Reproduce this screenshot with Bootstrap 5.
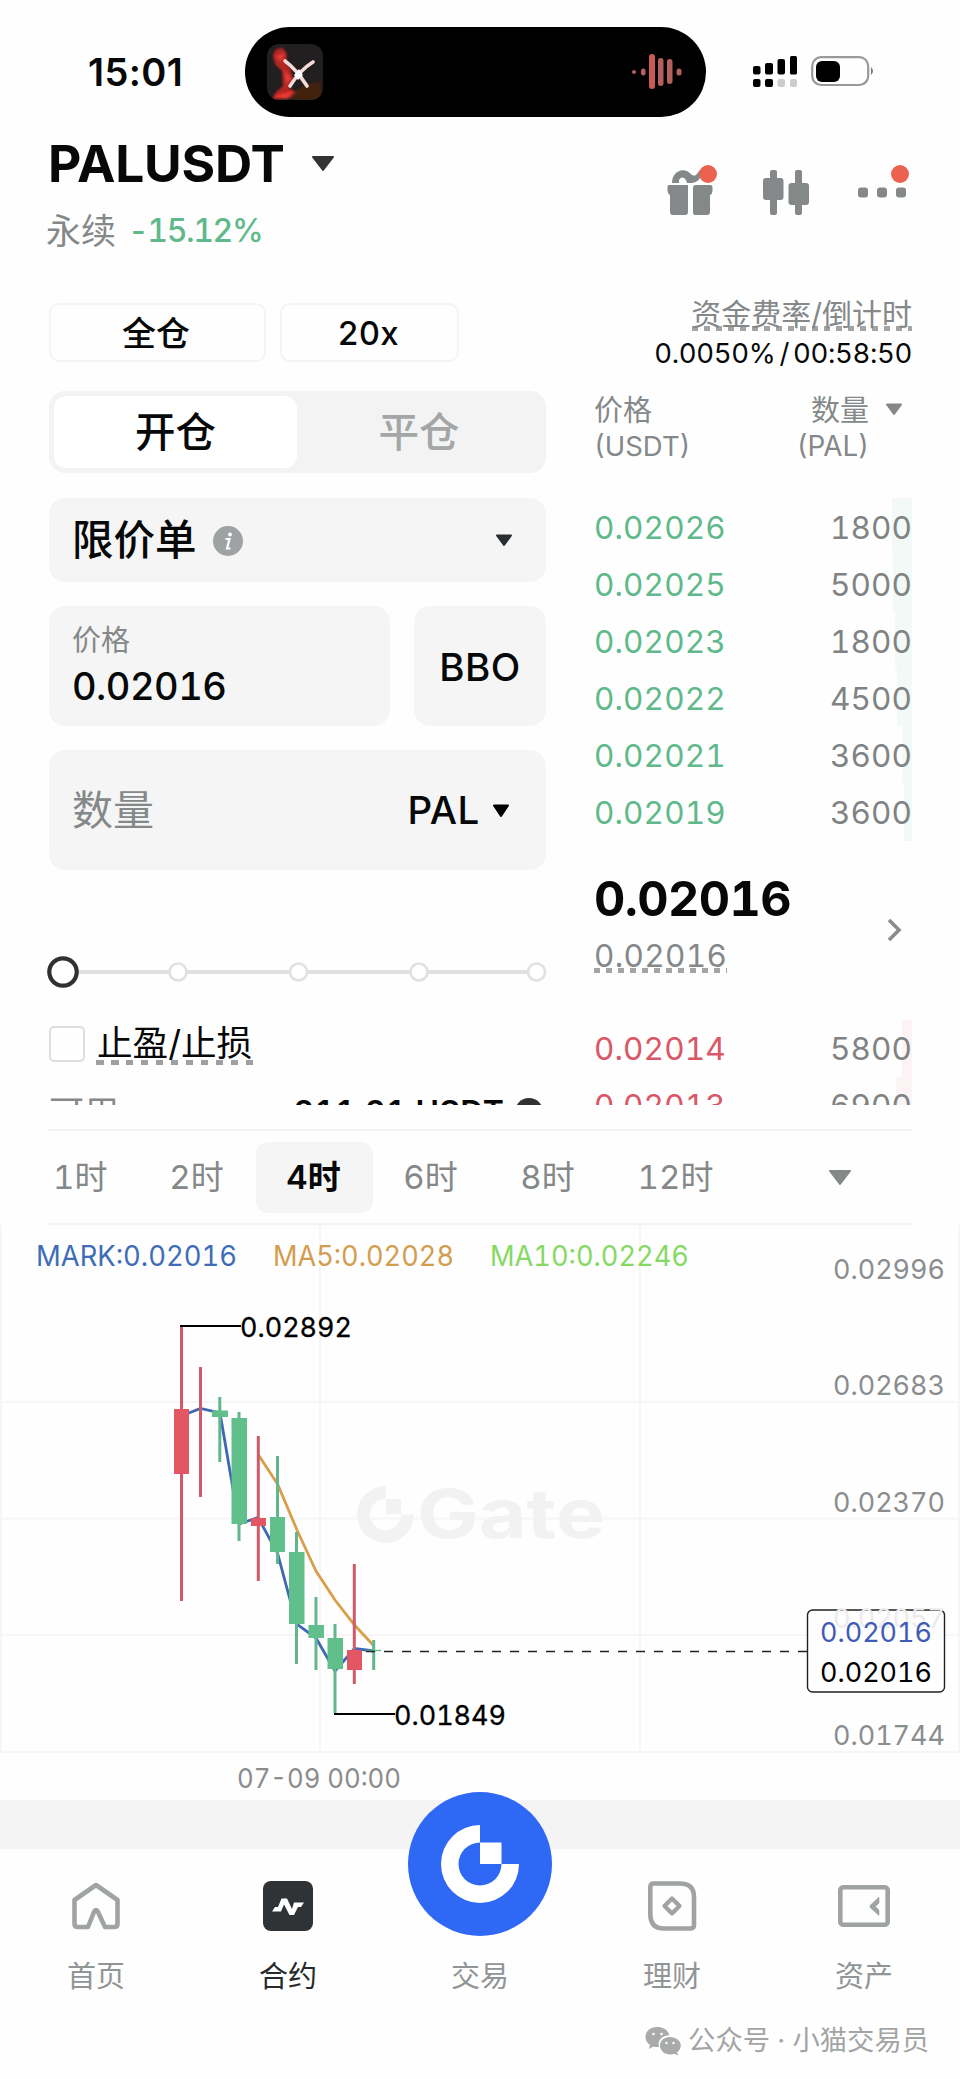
<!DOCTYPE html>
<html lang="zh-CN">
<head>
<meta charset="utf-8">
<meta name="viewport" content="width=device-width, initial-scale=1">
<title>PALUSDT 永续</title>
<link href="https://cdn.jsdelivr.net/npm/bootstrap@5.3.0/dist/css/bootstrap.min.css" rel="stylesheet">
<style>
  :root { --up:#5fb98b; --down:#d95767; --ink:#070808; --mute:#848889; --soft:#f5f5f5; }
  body { font-family: Inter, "Noto Sans CJK SC", sans-serif; font-variant-numeric: tabular-nums; color: var(--ink); background:#fefefe; width:960px; height:2079px; overflow:hidden; line-height:1; white-space:nowrap; }
  svg { display:block; flex:none; }
  .mute { color: var(--mute); }
  .status { height:135px; padding-left:88px; padding-top:27px; }
  .clock { font-size:38px; font-weight:600; width:157px; height:90px; letter-spacing:.4px; font-variant-numeric:normal; }
  .island { width:461px; height:90px; border-radius:45px; background:#000; padding:0 24px 0 22px; }
  .head { height:135px; padding:4px 48px 0 48px; }
  .symbol { font-size:51.5px; font-weight:700; height:50px; letter-spacing:-.2px; }
  .sub { height:62px; margin-top:11px; font-size:35px; margin-left:-2px; }
  .sub .chg { font-size:32px; letter-spacing:-1.4px; color:var(--up); font-weight:500; }
  .trade { height:835px; overflow:hidden; padding:0 48px 0 49px; }
  .leftcol { width:497px; padding-top:33px; }
  .rightcol { width:318px; }
  .box { background:var(--soft); border-radius:16px; }
  .pill { height:59px; border:2px solid #f3f4f4; border-radius:10px; font-size:34px; font-weight:500; padding:2px 3px 0 0; }
  .segment { height:82px; background:#f3f3f3; border-radius:16px; padding:5px; margin-top:29px; font-size:40.5px; font-weight:500; }
  .segment .on { width:243px; background:#fff; border-radius:12px; padding-top:2px; }
  .segment .off { color:#a4a6a6; padding-top:2px; }
  .order { height:84px; margin-top:25px; padding:1px 33px 0 23px; font-size:41.5px; font-weight:500; }
  .pricebox { width:341px; padding:17px 23px; }
  .dash { background:repeating-linear-gradient(90deg,#a3a5a5 0 6px,transparent 6px 12px) 0 100%/100% 5px no-repeat; }
  .dash-lg { background:repeating-linear-gradient(90deg,#a0a0a0 0 7.5px,transparent 7.5px 15px) 0 100%/100% 5px no-repeat; }
  .check { width:36px; height:36px; border:2.5px solid #dedede; border-radius:5px; }
  .bookrow { height:57.1px; font-size:31.5px; padding-top:2px; }
  .bookrow .px { letter-spacing:.1px; }
  .bookrow .qty { color:#7f8384; letter-spacing:.1px; }
  .buy .px { color:var(--up); } .sell .px { color:var(--down); }
  .depth-buy { background:linear-gradient(#f3f9f7,#f3f9f7) 100% 0/var(--w) 100% no-repeat; }
  .depth-sell { background:linear-gradient(#fcf4f4,#fcf4f4) 100% 0/var(--w) 100% no-repeat; }
  .last { font-size:48.5px; font-weight:700; letter-spacing:-.6px; height:50px; }
  .frames { margin:24px 48px 0 48px; height:96px; border-top:2px solid #f3f3f3; border-bottom:2px solid #f3f3f3; font-size:33px; color:var(--mute); }
  .frames > div { width:117px; height:71px; border-radius:12px; padding:1px 2px 0 0; }
  .frames .on { background:var(--soft); color:var(--ink); font-weight:600; }
  .tabbar { height:230px; padding-top:26px; font-size:29px; color:#929595; }
  .tabbar .item { width:192px; }
  .tabbar .ico { height:73px; padding-top:2px; }
  .trade-btn { position:absolute; left:408px; top:-57px; }
  .credit { font-size:27.3px; color:#a3a4a4; padding-right:31px; }
</style>
</head>
<body>
<header class="status d-flex">
  <div class="clock d-flex align-items-center">15:01</div>
  <div class="island d-flex align-items-center justify-content-between">
    <svg width="56" height="56" viewBox="0 0 56 56">
      <defs>
        <clipPath id="cv"><rect width="56" height="56" rx="12"/></clipPath>
        <filter id="soft"><feGaussianBlur stdDeviation="1.2"/></filter>
      </defs>
      <g clip-path="url(#cv)">
        <rect width="56" height="56" fill="#211f20"/>
        <g filter="url(#soft)">
          <path d="M6 12Q7 4 15 4Q22 8 19 19L23 24L26 34L22 44L29 48L24 54L5 56L9 48L16 42L15 27L8 20Z" fill="#b52623"/>
          <path d="M8 12L18 9L14 18ZM17 25L25 35L19 40Z" fill="#e23a34"/>
          <path d="M30 46Q42 38 54 38V56H26Z" fill="#43240f"/>
          <path d="M6 52L26 47L20 55Z" fill="#ea3a31"/>
        </g>
        <path d="M18 17Q29 25 40 42M46 18Q33 26 23 42" stroke="#f5dad8" stroke-width="3.6" fill="none" stroke-linecap="round"/>
        <path d="M32 25L36 31L31 36L27 31Z" fill="#fff"/>
      </g>
    </svg>
    <svg width="50" height="36" viewBox="0 0 50 36" fill="#b5605d">
      <rect x="0" y="16" width="4" height="4" rx="2"/><rect x="9" y="14.5" width="4.5" height="7" rx="2.2"/>
      <rect x="17" y="0" width="6" height="35" rx="3" fill="#cb5a55"/><rect x="26" y="4" width="5.5" height="28" rx="2.7"/>
      <rect x="35" y="5" width="5.5" height="25" rx="2.7"/><rect x="44.500" y="14.500" width="5" height="7" rx="2.500"/>
    </svg>
  </div>
  <svg width="130" height="34" viewBox="0 0 130 34" style="margin:27px 0 0 46px">
    <rect x="1" y="12" width="7.500" height="8.500" rx="2"/><rect x="13" y="9" width="8" height="11.500" rx="2"/><rect x="25.500" y="5" width="7.500" height="15.500" rx="2"/><rect x="38" y="2" width="7" height="18.500" rx="1.500"/>
    <rect x="1" y="25" width="7.500" height="8" rx="2"/><rect x="13" y="25" width="8" height="8" rx="2"/><rect x="25.500" y="25" width="7.500" height="8" rx="2" fill="#ccc"/><rect x="38" y="25" width="7" height="8" rx="2" fill="#ccc"/>
    <rect x="60.200" y="3.200" width="56" height="27.800" rx="9" fill="none" stroke="#999" stroke-width="2.200"/>
    <rect x="64" y="7" width="24" height="21" rx="6"/><path d="M119 13Q123 17 119 21Z" fill="#777"/>
  </svg>
</header>

<section class="head d-flex justify-content-between">
  <div>
    <div class="symbol d-flex align-items-center">PALUSDT
      <svg width="24" height="16" viewBox="0 0 24 16" style="margin-left:26px"><path d="M2 1H22L12 14Z" fill="#333" stroke="#333" stroke-width="2" stroke-linejoin="round"/></svg>
    </div>
    <div class="sub d-flex align-items-center"><span class="mute">永续</span><span class="chg" style="margin-left:12px">-15.12%</span></div>
  </div>
  <svg width="250" height="60" viewBox="662 160 250 60" style="margin-top:21px" fill="#848889">
    <path d="M672 183C672 173 680 168 687 171C691 173 692 177 696 175L700 170V178Q698 182 692 183H687C686 178 682 175 679 180V183Z"/>
    <path d="M669 185H688V212Q688 215 685 215H673Q670 215 670 212V195Q668 194 667.500 191V187Q667.500 185 669 185ZM693 188Q693 185 696 185H710Q712.500 185 712.500 187V191Q712.500 194 710 195V212Q710 215 707 215H695Q693 215 693 212Z"/>
    <circle cx="708" cy="174" r="9" fill="#ec6250"/>
    <rect x="770" y="170" width="7" height="45" rx="2"/><rect x="763" y="178" width="20.500" height="22" rx="3"/>
    <rect x="795" y="170" width="7" height="45" rx="2"/><rect x="788.500" y="183" width="20.500" height="22" rx="3"/>
    <rect x="858" y="187.500" width="10" height="10" rx="3"/><rect x="877" y="187.500" width="10" height="10" rx="3"/><rect x="896" y="187.500" width="10" height="10" rx="3"/>
    <circle cx="900" cy="174" r="9" fill="#ec6250"/>
  </svg>
</section>

<main class="trade d-flex justify-content-between">
  <div class="leftcol">
    <div class="d-flex">
      <div class="pill d-flex align-items-center justify-content-center" style="width:217px">全仓</div>
      <div class="pill d-flex align-items-center justify-content-center" style="width:179px;margin-left:14px;font-size:33px">20x</div>
    </div>
    <div class="segment d-flex">
      <div class="on d-flex align-items-center justify-content-center">开仓</div>
      <div class="off flex-fill d-flex align-items-center justify-content-center">平仓</div>
    </div>
    <div class="box order d-flex align-items-center">限价单
      <svg width="30" height="30" viewBox="0 0 30 30" style="margin-left:16px"><circle cx="15" cy="15" r="15" fill="#9fa2a3"/><circle cx="17" cy="8.500" r="1.900" fill="#fff"/><path d="M12.500 13H16.500L14 22.500H17.500" fill="none" stroke="#fff" stroke-width="2.200"/></svg>
      <svg class="ms-auto" width="18" height="13" viewBox="0 0 18 13"><path d="M2 1.500H16L9 11Z" fill="#2b2e30" stroke="#2b2e30" stroke-width="2" stroke-linejoin="round"/></svg>
    </div>
    <div class="d-flex justify-content-between" style="height:120px;margin-top:24px">
      <div class="box pricebox">
        <div class="mute d-flex align-items-center" style="font-size:29px;height:34px">价格</div>
        <div class="d-flex align-items-center" style="font-size:38px;font-weight:500;height:58px;letter-spacing:-.5px">0.02016</div>
      </div>
      <div class="box d-flex align-items-center justify-content-center" style="width:132px;font-size:38.500px;font-weight:500;letter-spacing:.5px;padding-top:2px">BBO</div>
    </div>
    <div class="box d-flex align-items-center" style="height:120px;margin-top:24px;padding:1px 36px 0 23px;font-size:41px">
      <span class="mute">数量</span><span class="ms-auto" style="font-size:38.500px;font-weight:500;letter-spacing:.6px">PAL</span>
      <svg width="18" height="14" viewBox="0 0 18 14" style="margin-left:12px"><path d="M2 1.500H16L9 12Z" stroke="#000" stroke-width="2" stroke-linejoin="round"/></svg>
    </div>
    <svg width="500" height="36" viewBox="47 954 500 36" style="margin:84px 0 0 -2px">
      <path d="M63 972H536" stroke="#e1e1e1" stroke-width="4"/>
      <g fill="#fff" stroke="#e1e1e1" stroke-width="2.600"><circle cx="178" cy="972" r="8.500"/><circle cx="298.500" cy="972" r="8.500"/><circle cx="419" cy="972" r="8.500"/><circle cx="536.500" cy="972" r="8.500"/></g>
      <circle cx="63" cy="972" r="13.700" fill="#fff" stroke="#2f3133" stroke-width="4.200"/>
    </svg>
    <div class="d-flex align-items-center" style="height:54px;margin-top:27px">
      <div class="check"></div>
      <div class="dash-lg d-flex align-items-center" style="margin-left:11px;height:42px;font-size:35.600px;width:158px;padding-left:1px">止盈/止损</div>
    </div>
    <div class="d-flex align-items-center" style="height:40px;margin-top:22px;font-size:33px">
      <span class="mute" style="font-size:35px">可用</span>
      <span class="ms-auto" style="font-size:32px;font-weight:600;letter-spacing:.2px">211.21 USDT</span>
      <svg width="28" height="28" viewBox="0 0 28 28" style="margin:0 3px 2px 11px"><circle cx="14" cy="14" r="14" fill="#303234"/><path d="M14 10V21M9 15H19" stroke="#fff" stroke-width="3"/></svg>
    </div>
  </div>

  <div class="rightcol">
    <div class="d-flex flex-column align-items-end" style="padding-top:26px">
      <div class="dash mute d-flex align-items-center justify-content-end" style="font-size:30px;height:35px;width:220px">资金费率/倒计时</div>
      <div class="d-flex align-items-center" style="font-size:27.500px;height:46px;letter-spacing:-.35px;word-spacing:-3px">0.0050% / 00:58:50</div>
    </div>
    <div class="mute d-flex justify-content-between" style="font-size:29px;margin-top:14px;height:107px">
      <div>
        <div class="d-flex align-items-center" style="height:38px">价格</div>
        <div class="d-flex align-items-center" style="height:36px;font-size:27.500px">(USDT)</div>
      </div>
      <div class="d-flex">
        <div class="d-flex flex-column align-items-end">
          <div class="d-flex align-items-center" style="height:38px">数量</div>
          <div class="d-flex align-items-center" style="height:36px;font-size:27.800px">(PAL)</div>
        </div>
        <svg width="18" height="13" viewBox="0 0 18 13" style="margin:12px 9px 0 16px"><path d="M2 1.500H16L9 11Z" fill="#848889" stroke="#848889" stroke-width="2" stroke-linejoin="round"/></svg>
      </div>
    </div>
    <div class="buy">
      <div class="bookrow d-flex align-items-center justify-content-between depth-buy" style="--w:20px"><span class="px">0.02026</span><span class="qty">1800</span></div>
      <div class="bookrow d-flex align-items-center justify-content-between depth-buy" style="--w:19px"><span class="px">0.02025</span><span class="qty">5000</span></div>
      <div class="bookrow d-flex align-items-center justify-content-between depth-buy" style="--w:17px"><span class="px">0.02023</span><span class="qty">1800</span></div>
      <div class="bookrow d-flex align-items-center justify-content-between depth-buy" style="--w:15px"><span class="px">0.02022</span><span class="qty">4500</span></div>
      <div class="bookrow d-flex align-items-center justify-content-between depth-buy" style="--w:10px"><span class="px">0.02021</span><span class="qty">3600</span></div>
      <div class="bookrow d-flex align-items-center justify-content-between depth-buy" style="--w:8px"><span class="px">0.02019</span><span class="qty">3600</span></div>
    </div>
    <div class="d-flex justify-content-between align-items-center" style="height:100px;margin-top:33px">
      <div>
        <div class="last d-flex align-items-center">0.02016</div>
        <div class="dash mute d-flex" style="font-size:31.500px;height:40px;letter-spacing:.3px;width:133px;padding-top:7px;margin-top:9px">0.02016</div>
      </div>
      <svg width="18" height="28" viewBox="0 0 18 28" style="margin:12px 9px 0 0"><path d="M4 4L14 14L4 24" fill="none" stroke="#8a8c8d" stroke-width="3.600"/></svg>
    </div>
    <div class="sell" style="margin-top:46px">
      <div class="bookrow d-flex align-items-center justify-content-between depth-sell" style="--w:10px"><span class="px">0.02014</span><span class="qty">5800</span></div>
      <div class="bookrow d-flex align-items-center justify-content-between depth-sell" style="--w:16px"><span class="px">0.02013</span><span class="qty">6900</span></div>
    </div>
  </div>
</main>

<nav class="frames d-flex align-items-center">
  <div class="d-flex align-items-center" style="width:91px;padding-left:5px">1时</div>
  <div class="d-flex align-items-center justify-content-center">2时</div>
  <div class="on d-flex align-items-center justify-content-center">4时</div>
  <div class="d-flex align-items-center justify-content-center">6时</div>
  <div class="d-flex align-items-center justify-content-center">8时</div>
  <div class="d-flex align-items-center justify-content-center" style="width:139px">12时</div>
  <svg width="24" height="17" viewBox="0 0 24 17" style="margin-left:82px"><path d="M2 2H22L12 15Z" fill="#848889" stroke="#848889" stroke-width="2" stroke-linejoin="round"/></svg>
</nav>

<svg width="960" height="575" viewBox="0 1225 960 575" font-size="27">
  <g stroke="#f6f6f6" stroke-width="2"><path d="M1 1225V1752M320 1225V1752M640 1225V1752M959 1225V1752M0 1402H960M0 1518.500H960M0 1635H960M0 1752H960"/></g>
  <g font-size="28">
    <text x="36" y="1266" fill="#3f6cb9" textLength="201" lengthAdjust="spacingAndGlyphs">MARK:0.02016</text>
    <text x="273" y="1266" fill="#d39d50" textLength="181" lengthAdjust="spacingAndGlyphs">MA5:0.02028</text>
    <text x="490" y="1266" fill="#86d963" textLength="199" lengthAdjust="spacingAndGlyphs">MA10:0.02246</text>
  </g>
  <g fill="#f2f2f2">
    <path d="M385.500 1486V1499A15.500 15.500 0 1 0 401 1514.500H414A28.500 28.500 0 1 1 385.500 1486Z"/><rect x="386" y="1499" width="15" height="15"/>
    <text x="417" y="1538" font-size="68" font-weight="700" textLength="188" lengthAdjust="spacingAndGlyphs">Gate</text>
  </g>
  <g fill="#8a8d8e">
    <text x="833" y="1279" textLength="112" lengthAdjust="spacingAndGlyphs">0.02996</text>
    <text x="833" y="1395" textLength="112" lengthAdjust="spacingAndGlyphs">0.02683</text>
    <text x="833" y="1512" textLength="112" lengthAdjust="spacingAndGlyphs">0.02370</text>
    <text x="833" y="1745" textLength="112" lengthAdjust="spacingAndGlyphs">0.01744</text>
    <text x="237" y="1788" font-size="27.500" textLength="164" lengthAdjust="spacingAndGlyphs">07-09 00:00</text>
  </g>
  <path d="M181 1416L200.500 1408.500L220 1413L239 1524L258 1517.500L277.500 1553L296.500 1624L316 1638L335 1671L354.500 1648.500L374 1651" fill="none" stroke="#3d68b3" stroke-width="2.800"/>
  <path d="M258.500 1455L277.500 1484L297 1530L316 1571L335 1600L354.500 1625L374 1646" fill="none" stroke="#d89e49" stroke-width="2.800"/>
  <g stroke-width="3" stroke="#cf5b69"><path d="M181.500 1325V1601M200.500 1367V1497M258.300 1436V1581M354.300 1564V1684"/></g>
  <g fill="#e35663"><rect x="174" y="1409" width="15" height="65"/><rect x="251" y="1518" width="15" height="8"/><rect x="347" y="1650" width="15" height="20"/></g>
  <g stroke-width="3" stroke="#62b68d"><path d="M219.800 1397V1462M239 1412V1541M277.500 1456V1564M296.500 1532V1664M316 1597V1670M335 1624V1713M373.700 1640V1670"/></g>
  <g fill="#60bf8a"><rect x="212" y="1410.500" width="16" height="6.500"/><rect x="231.500" y="1418" width="15.500" height="106"/><rect x="270" y="1517" width="15" height="35"/><rect x="289" y="1552" width="15.500" height="72"/><rect x="308.500" y="1625" width="15.500" height="13"/><rect x="327.500" y="1638" width="15.500" height="31"/><rect x="366" y="1649.800" width="15" height="1.400"/></g>
  <path d="M180 1326H241M334 1714H395" stroke="#000" stroke-width="2.200"/>
  <path d="M366 1651.500H807" stroke="#222" stroke-width="1.600" stroke-dasharray="9 9"/>
  <g fill="#000" stroke="#000" stroke-width=".3">
    <text x="240" y="1337" textLength="112" lengthAdjust="spacingAndGlyphs">0.02892</text>
    <text x="394" y="1725" textLength="112" lengthAdjust="spacingAndGlyphs">0.01849</text>
  </g>
  <rect x="807.500" y="1610" width="137" height="82" rx="5" fill="#fefefe" stroke="#222" stroke-width="1.400"/>
  <text x="833" y="1628" fill="#ececef" textLength="112" lengthAdjust="spacingAndGlyphs">0.02057</text>
  <text x="820" y="1642" fill="#3f5cb5" textLength="112" lengthAdjust="spacingAndGlyphs">0.02016</text>
  <text x="820" y="1682" textLength="112" lengthAdjust="spacingAndGlyphs">0.02016</text>
</svg>

<div style="height:49px;background:#f4f4f5"></div>
<footer class="tabbar position-relative">
  <div class="d-flex">
    <div class="item d-flex flex-column align-items-center">
      <div class="ico"><svg width="50" height="54" viewBox="0 0 50 54" fill="none" stroke="#a0a3a3" stroke-width="4.600" stroke-linejoin="round"><path d="M25 8L46.500 23V47Q46.500 50 43.500 50H34L27 35Q25 31 23 35L17 50H6.500Q3.500 50 3.500 47V23Z"/></svg></div>
      <div class="d-flex align-items-center" style="height:56px">首页</div>
    </div>
    <div class="item d-flex flex-column align-items-center" style="color:#27292b">
      <div class="ico"><svg width="50" height="56" viewBox="0 0 50 56"><rect y="4" width="50" height="50" rx="8" fill="#303335"/><path d="M9 34.500L12 30H15L18.500 21.500H24L29 32L31 25.500H41L38 30H35L31 38H26.500L21 27.500L18 34.500Z" fill="#fff"/></svg></div>
      <div class="d-flex align-items-center" style="height:56px">合约</div>
    </div>
    <div class="item d-flex flex-column align-items-center">
      <div class="ico"></div>
      <div class="d-flex align-items-center" style="height:56px">交易</div>
    </div>
    <div class="item d-flex flex-column align-items-center">
      <div class="ico"><svg width="50" height="56" viewBox="0 0 50 56" fill="none" stroke="#a0a3a3" stroke-width="4.600"><path d="M7 6.500H33Q47 6.500 47 20V48Q47 51.500 43 51.500H17Q3.300 51.500 3.300 37V10Q3.300 6.500 7 6.500Z"/><path d="M25 21.500L32.500 29L25 36.500L17.500 29Z" stroke-linejoin="round" stroke-width="4.200"/></svg></div>
      <div class="d-flex align-items-center" style="height:56px">理财</div>
    </div>
    <div class="item d-flex flex-column align-items-center">
      <div class="ico"><svg width="54" height="56" viewBox="0 0 54 56" fill="none" stroke="#a0a3a3" stroke-width="4.600"><rect x="3.300" y="10.300" width="47.400" height="37.400" rx="3"/><path d="M42 20V26L38.500 29.500L42 33V38.500L33 30.500V28.500Z" fill="#a0a3a3" stroke-width=".6"/></svg></div>
      <div class="d-flex align-items-center" style="height:56px">资产</div>
    </div>
  </div>
  <div class="credit d-flex align-items-center justify-content-end" style="height:40px;margin-top:17px">
    <svg width="36" height="30" viewBox="0 0 36 30" style="margin-right:7px" fill="#a9abab"><path d="M12 1C5 1 .5 5.500 .5 11C.5 14.500 2.500 17.500 5 19L4 23L8.500 20.500Q11 21.300 14 21C12 14 18 9 24.500 9.300C23 4 18 1 12 1Z"/><path d="M25 11C19 11 15 15 15 19.500C15 24.500 19.500 28.500 25 28.500Q27.500 28.500 29.500 27.700L33 29.500L32.200 26C34.500 24.500 35.800 22 35.800 19.500C35.800 15 31 11 25 11Z"/><g fill="#fff"><circle cx="8.500" cy="8" r="1.300"/><circle cx="16.500" cy="8" r="1.300"/><circle cx="21.500" cy="17" r="1.200"/><circle cx="28.500" cy="17" r="1.200"/></g></svg>
    <span>公众号 · 小猫交易员</span>
  </div>
  <svg class="trade-btn" width="144" height="144" viewBox="0 0 144 144"><circle cx="72" cy="72" r="72" fill="#2e68f5"/><path d="M72 33V50.500A21.500 21.500 0 1 0 93.500 72H111A39 39 0 1 1 72 33Z" fill="#fff"/><rect x="72" y="50.500" width="21.500" height="21.500" fill="#fff"/></svg>
</footer>
<script src="https://cdn.jsdelivr.net/npm/bootstrap@5.3.0/dist/js/bootstrap.bundle.min.js"></script>
</body>
</html>
